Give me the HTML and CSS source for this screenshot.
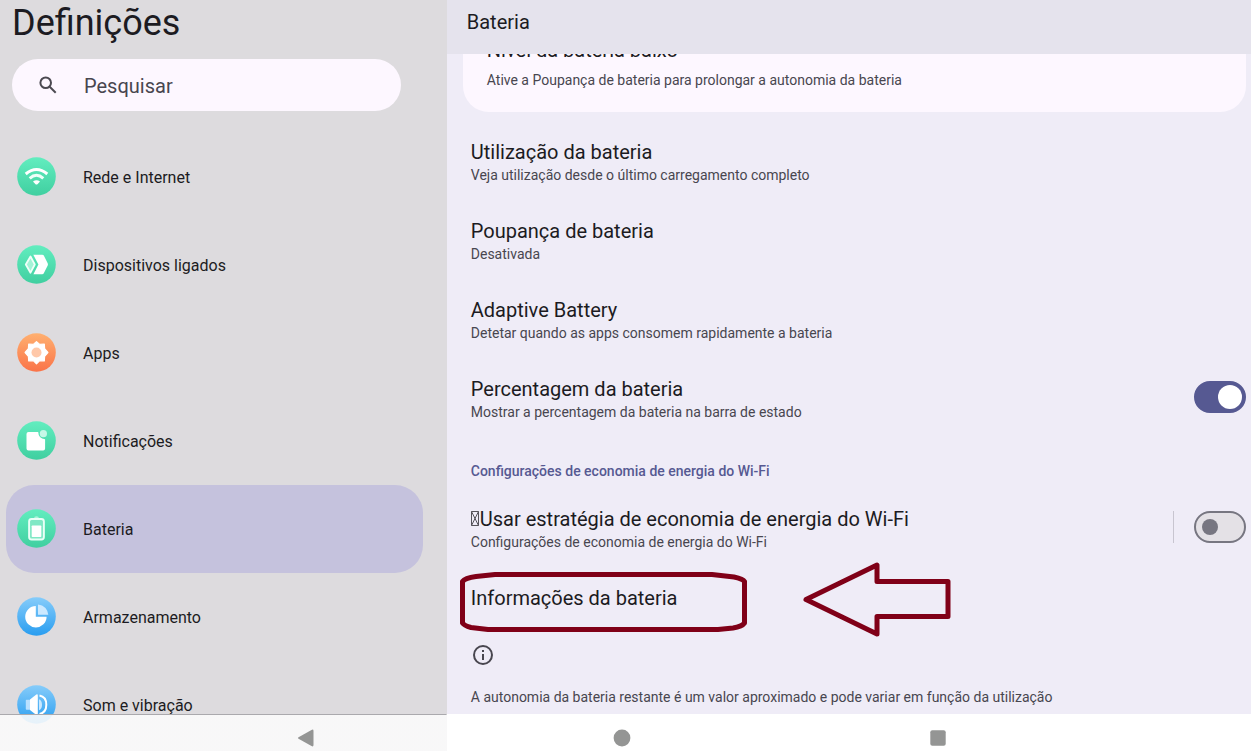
FILE: index.html
```html
<!DOCTYPE html>
<html lang="pt">
<head>
<meta charset="utf-8">
<title>Definições</title>
<link rel="stylesheet" href="styles.css">
</head>
<body>
<svg class="defs" aria-hidden="true">
  <defs>
    <linearGradient id="green" x1="0" y1="0" x2="0" y2="1"><stop offset="0" stop-color="#62edbf"/><stop offset="1" stop-color="#40cfa0"/></linearGradient>
    <linearGradient id="orange" x1="0" y1="0" x2="0" y2="1"><stop offset="0" stop-color="#ffb070"/><stop offset="1" stop-color="#fa7348"/></linearGradient>
    <linearGradient id="blue" x1="0" y1="0" x2="0" y2="1"><stop offset="0" stop-color="#86ccfa"/><stop offset="1" stop-color="#289df0"/></linearGradient>
  </defs>
</svg>
<div class="screen">
  <aside class="sidebar">
    <h1 class="title">Definições</h1>
    <label class="search">
      <svg class="search-icon" viewBox="0 0 18 18"><circle cx="6.7" cy="6.7" r="5.3"/><path d="M10.700 10.700l6 6"/></svg>
      <input class="search-input" type="text" placeholder="Pesquisar" aria-label="Pesquisar">
    </label>
    <nav class="menu">
      <a class="menu-item" href="#rede">
        <svg class="menu-icon" viewBox="0 0 39 39"><circle cx="19.500" cy="19.500" r="19.300" fill="url(#green)"/><g fill="none" stroke="#fff" stroke-width="3"><path d="M8.700 17q10.800-9 21.600 0"/><path d="M12.700 21.300q6.800-6 13.600 0" stroke="#effff9"/></g><path d="M16 24.600q3.500-2.800 7 0L20.700 27q-1.200 1.100-2.400 0z" fill="#fff"/></svg>
        <span class="menu-label">Rede e Internet</span>
      </a>
      <a class="menu-item" href="#dispositivos">
        <svg class="menu-icon" viewBox="0 0 39 39"><circle cx="19.500" cy="19.500" r="19.300" fill="url(#green)"/><path d="M13.500 11.500l4.300 8-4.300 8.200-4.700-8.200z" fill="#a4f3d7" stroke="#effff9" stroke-width="1.800" stroke-linejoin="round"/><path d="M16.300 9.700h9q1 0 1.500.9l3.900 7.700q.5 1.200 0 2.300l-3.900 7.700q-.5 1-1.600 1h-8.800l5-9.700z" fill="#fff"/></svg>
        <span class="menu-label">Dispositivos ligados</span>
      </a>
      <a class="menu-item" href="#apps">
        <svg class="menu-icon" viewBox="0 0 39 39"><circle cx="19.500" cy="19.500" r="19.300" fill="url(#orange)"/><path d="M19.500 8.600l3.200 2.800 4.600-.4.300 4.600 3.300 3.900-3.300 3.900-.3 4.600-4.600-.4-3.200 3.300-3.200-3.300-4.600.4-.3-4.600-3.300-3.900 3.300-3.900.3-4.600 4.600.4z" fill="#fff" stroke="#fff" stroke-width="1.200" stroke-linejoin="round"/><circle cx="19.500" cy="19.500" r="5" fill="#ffc8a9"/></svg>
        <span class="menu-label">Apps</span>
      </a>
      <a class="menu-item" href="#notificacoes">
        <svg class="menu-icon" viewBox="0 0 39 39"><circle cx="19.500" cy="19.500" r="19.300" fill="url(#green)"/><path d="M11.500 11h9.700q.3 6.700 6.900 7.200v9.300q0 2-2 2H11.500q-2 0-2-2V13q0-2 2-2z" fill="#fff"/><circle cx="26.400" cy="12.700" r="3.600" fill="#c7f8e7"/></svg>
        <span class="menu-label">Notificações</span>
      </a>
      <a class="menu-item menu-item-active" href="#bateria" aria-current="page">
        <svg class="menu-icon" viewBox="0 0 39 39"><circle cx="19.500" cy="19.500" r="19.300" fill="url(#green)"/><path d="M17 9.500q0-2.200 2.500-2.200T22 9.500z" fill="#a9f4da"/><rect x="12.100" y="10" width="14.800" height="20.500" rx="2.500" fill="#80e8c5" stroke="#e9fff7" stroke-width="1.900"/><rect x="14.700" y="16.500" width="9.600" height="11.500" rx=".7" fill="#fff"/></svg>
        <span class="menu-label">Bateria</span>
      </a>
      <a class="menu-item" href="#armazenamento">
        <svg class="menu-icon" viewBox="0 0 39 39"><circle cx="19.500" cy="19.500" r="19.300" fill="url(#blue)"/><path d="M18.800 9v10.800h10.800A10.700 10.700 0 1 1 18.800 9z" fill="#fff"/><path d="M21 7.400q9 1.200 10.300 10.300H21z" fill="#cce9ff"/></svg>
        <span class="menu-label">Armazenamento</span>
      </a>
      <a class="menu-item" href="#som">
        <svg class="menu-icon" viewBox="0 0 39 39"><circle cx="19.500" cy="19.500" r="19.300" fill="url(#blue)"/><path d="M9.500 14.800H13v9.900H9.500q-.7 0-.7-.8v-8.300q0-.8.700-.8z" fill="#b9e0ff"/><path d="M13 14.500l6.300-5q1.500-1 1.500.9V29q0 1.900-1.500.9L13 25z" fill="#fff"/><path d="M22 14.300q3 1.300 3 5.400t-3 5.500z" fill="#c9e8ff"/><path d="M22.500 10.500q6.800 1.200 6.800 9.200t-6.800 9.200" fill="none" stroke="#fff" stroke-width="2"/></svg>
        <span class="menu-label">Som e vibração</span>
      </a>
    </nav>
  </aside>
  <main class="panel">
    <header class="panel-header"><h2 class="panel-title">Bateria</h2></header>
    <div class="panel-scroll">
      <section class="card">
        <h3 class="pref-title">Nível da bateria baixo</h3>
        <p class="pref-summary">Ative a Poupança de bateria para prolongar a autonomia da bateria</p>
      </section>
      <section class="pref">
        <div>
          <h3 class="pref-title">Utilização da bateria</h3>
          <p class="pref-summary">Veja utilização desde o último carregamento completo</p>
        </div>
      </section>
      <section class="pref">
        <div>
          <h3 class="pref-title">Poupança de bateria</h3>
          <p class="pref-summary">Desativada</p>
        </div>
      </section>
      <section class="pref">
        <div>
          <h3 class="pref-title">Adaptive Battery</h3>
          <p class="pref-summary">Detetar quando as apps consomem rapidamente a bateria</p>
        </div>
      </section>
      <section class="pref">
        <label for="percent">
          <span class="pref-title">Percentagem da bateria</span>
          <span class="pref-summary">Mostrar a percentagem da bateria na barra de estado</span>
        </label>
        <input class="switch" id="percent" type="checkbox" role="switch" checked>
      </section>
      <h3 class="category">Configurações de economia de energia do Wi-Fi</h3>
      <section class="pref">
        <label for="wifi">
          <span class="pref-title"><svg class="missing" viewBox="0 0 8 15" aria-hidden="true"><path d="M.5.500h7v14h-7zl7 14m0-14l-7 14"/></svg>Usar estratégia de economia de energia do Wi-Fi</span>
          <span class="pref-summary">Configurações de economia de energia do Wi-Fi</span>
        </label>
        <span class="switch-group"><input class="switch" id="wifi" type="checkbox" role="switch"></span>
      </section>
      <section class="pref pref-marked">
        <h3 class="pref-title">Informações da bateria</h3>
        <svg class="annotation" viewBox="0 0 492 76" aria-hidden="true">
          <path d="M3.500 20.500Q6 17 17 15.500L36 13.500H253L275 16Q284 18 285.500 20.500V62Q283 65.500 274 67L259 68.500H29L12 66.500Q5 64.500 3.500 62z"/>
          <path d="M347 38.500L418 4V20.500H489V55.500H418V73z"/>
        </svg>
      </section>
      <footer class="note">
        <svg class="info-icon" viewBox="0 0 20 20" aria-hidden="true"><circle cx="10" cy="10" r="9"/><path d="M10 9v6M10 5v2"/></svg>
        <p class="pref-summary">A autonomia da bateria restante é um valor aproximado e pode variar em função da utilização</p>
      </footer>
    </div>
  </main>
  <nav class="system-bar" aria-label="Sistema">
    <button class="system-button" aria-label="Voltar"><svg viewBox="0 0 18 18"><path d="M1.500 8.200L14.500.9q2-.9 2 1v14.200q0 1.900-2 1L1.500 9.800q-1.200-.8 0-1.600z"/></svg></button>
    <button class="system-button" aria-label="Início"><svg viewBox="0 0 18 18"><circle cx="9" cy="9" r="8.400"/></svg></button>
    <button class="system-button" aria-label="Recentes"><svg viewBox="0 0 18 18"><rect x="1.300" y="1.300" width="15.400" height="15.400" rx="2"/></svg></button>
  </nav>
</div>
</body>
</html>
```
FILE: styles.css
```css
* {
  box-sizing: border-box;
}

body,
h1,
h2,
h3,
p {
  margin: 0;
  font-weight: 400;
}

body {
  font-family: Roboto, "Noto Sans", sans-serif;
  color: #1c1b22;
  background: #efecf7;
}

.defs {
  position: absolute;
  width: 0;
  height: 0;
}

.screen {
  position: relative;
  display: grid;
  grid-template-columns: 5fr 9fr;
  height: 100vh;
  overflow: hidden;
}

.sidebar {
  min-width: 0;
  padding: 0 24px 0 6px;
  overflow: hidden;
  background: #dddbde;
}

.title {
  padding-left: 6px;
  font-size: 36px;
  line-height: 46px;
}

.search {
  display: flex;
  align-items: center;
  gap: 27px;
  height: 52px;
  margin: 13px 22px 22px 6px;
  padding: 0 27px;
  border-radius: 26px;
  background: #fdf7ff;
}

.search-icon {
  flex: none;
  width: 18px;
  height: 18px;
  fill: none;
  stroke: #4b4951;
  stroke-width: 2;
}

.search-input {
  flex: 1;
  min-width: 0;
  padding: 2px 0 0;
  border: 0;
  outline: 0;
  background: none;
  font: 20px/24px Roboto, sans-serif;
  color: #48464f;
}

.search-input::placeholder {
  color: #48464f;
  opacity: 1;
}

.menu-item {
  display: flex;
  align-items: center;
  gap: 27px;
  height: 88px;
  padding: 0 0 2px 11px;
  border-radius: 28px;
  font-size: 16px;
  line-height: 24px;
  color: #1c1b22;
  text-decoration: none;
}

.menu-item-active {
  background: #c5c2dd;
}

.menu-icon {
  flex: none;
  width: 39px;
  height: 39px;
}

.menu-label {
  padding-top: 4px;
}

.panel {
  display: flex;
  flex-direction: column;
  min-width: 0;
  min-height: 0;
  background: #efecf7;
}

.panel-header {
  flex: none;
  height: 54px;
  padding: 10px 20px;
  background: #e5e3ed;
}

.panel-title {
  font-size: 20px;
  line-height: 24px;
}

.panel-scroll {
  flex: 1;
  min-height: 0;
  padding: 0 5px 0 16px;
  overflow: hidden;
}

.card {
  margin: -33px 0 11px;
  padding: 16px 24px 21px;
  border-radius: 0 0 26px 26px;
  background: #fdf7ff;
}

.card .pref-summary {
  padding-top: 7px;
}

.pref {
  display: flex;
  align-items: center;
  justify-content: space-between;
  padding: 16px 0 16px 8px;
}

.pref-title,
.pref-summary {
  display: block;
}

.pref-title {
  font-size: 20px;
  line-height: 26px;
}

.pref-summary {
  font-size: 14px;
  line-height: 21px;
  color: #48464f;
}

.category {
  padding: 22px 8px 9px;
  font-size: 14px;
  font-weight: 500;
  line-height: 20px;
  color: #565992;
}

.missing {
  width: 8px;
  height: 15px;
  margin-right: 1px;
  fill: none;
  stroke: #55535a;
  stroke-width: 1;
}

.switch {
  flex: none;
  width: 52px;
  height: 32px;
  margin: 0 0 6px;
  padding: 6px;
  border: 2px solid #777681;
  border-radius: 16px;
  appearance: none;
  background: #e4e1e6;
}

.switch::before {
  content: "";
  display: block;
  width: 16px;
  height: 16px;
  border-radius: 50%;
  background: #777681;
}

.switch:checked {
  padding: 2px 2px 2px 22px;
  border-color: #565992;
  background: #565992;
}

.switch:checked::before {
  width: 24px;
  height: 24px;
  background: #fff;
}

.switch-group {
  display: flex;
  padding-left: 21px;
  background: linear-gradient(#c8c5d0, #c8c5d0) left top / 1px 32px no-repeat;
}

.pref-marked {
  position: relative;
}

.annotation {
  position: absolute;
  top: -8px;
  left: -4px;
  width: 492px;
  height: 76px;
  fill: none;
  stroke: #800018;
  stroke-width: 5;
  stroke-linejoin: round;
}

.note {
  padding: 18px 8px;
}

.info-icon {
  display: block;
  width: 24px;
  height: 20px;
  margin-bottom: 22px;
  fill: none;
  stroke: #48464f;
  stroke-width: 2;
}

.system-bar {
  position: absolute;
  right: 0;
  bottom: 0;
  left: 0;
  display: flex;
  justify-content: center;
  height: 37px;
  padding-right: 7px;
  background:
    linear-gradient(#aaa9ad, #aaa9ad) left top / 35.7% 1px no-repeat,
    linear-gradient(90deg, rgb(251 251 251 / 90%) 35.7%, #fff 35.7%);
}

.system-button {
  display: flex;
  flex: 0 1 316px;
  align-items: center;
  justify-content: center;
  padding: 10px 0 0;
  border: 0;
  background: none;
}

.system-button svg {
  width: 18px;
  height: 18px;
  fill: #949594;
}
```
